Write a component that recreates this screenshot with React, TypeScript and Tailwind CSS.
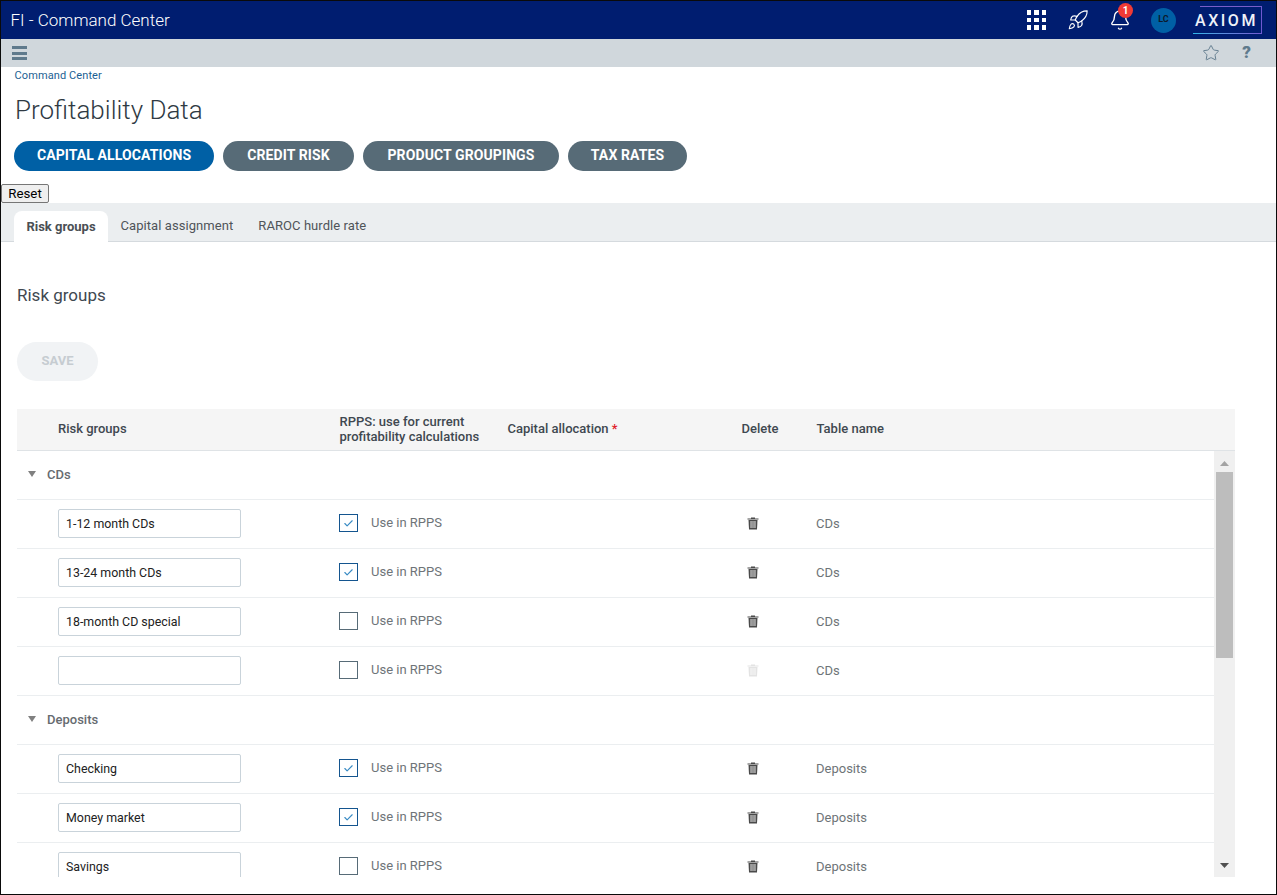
import React from 'react'
import { Bell, Rocket, Star, Check } from 'lucide-react'

const TABS = ['Risk groups', 'Capital assignment', 'RAROC hurdle rate']

const PILLS = [
  { label: 'CAPITAL ALLOCATIONS', width: 'w-[200px]', color: 'bg-[#0060a5]' },
  { label: 'CREDIT RISK', width: 'w-[131px]', color: 'bg-[#576b77]' },
  { label: 'PRODUCT GROUPINGS', width: 'w-[196px]', color: 'bg-[#576b77]' },
  { label: 'TAX RATES', width: 'w-[119px]', color: 'bg-[#576b77]' },
]

type Row = { name: string; checked: boolean; canDelete?: boolean }

const GROUPS: { title: string; rows: Row[] }[] = [
  {
    title: 'CDs',
    rows: [
      { name: '1-12 month CDs', checked: true },
      { name: '13-24 month CDs', checked: true },
      { name: '18-month CD special', checked: false },
      { name: '', checked: false, canDelete: false },
    ],
  },
  {
    title: 'Deposits',
    rows: [
      { name: 'Checking', checked: true },
      { name: 'Money market', checked: true },
      { name: 'Savings', checked: false },
    ],
  },
]

function TrashIcon({ disabled }: { disabled?: boolean }) {
  const dark = disabled ? '#e3e3e3' : '#4a4a4a'
  const mid = disabled ? '#f0f0f0' : '#a8a8a8'
  return (
    <svg width="12" height="13" viewBox="0 0 12 13">
      <path d="M4 1.5V.5h4v1h3.5v1H.5v-1z" fill={dark} />
      <path d="M1.5 3h9l-.5 9.5H2z" fill={dark} />
      <path d="M3.2 4h5.6v7H3.2z" fill={mid} />
      <path d="M4.8 4h.6v7h-.6zM6.6 4h.6v7h-.6z" fill={dark} opacity=".45" />
    </svg>
  )
}

function GroupRow({ title }: { title: string }) {
  return (
    <div className="h-[49px] shrink-0 flex items-center border-b border-[#ebeef0]">
      <svg className="ml-[11px] mt-[-2px]" width="8" height="6" viewBox="0 0 8 6">
        <path d="M0 0h8L4 6z" fill="#808080" />
      </svg>
      <span className="ml-[11px] text-[13px] font-medium text-[#666b70]">{title}</span>
    </div>
  )
}

function DataRow({ row, table }: { row: Row; table: string }) {
  return (
    <div className="h-[49px] shrink-0 flex items-center border-b border-[#ebeef0]">
      <div className="w-[322px] pl-[41px]">
        <input
          readOnly
          value={row.name}
          className="block w-[183px] h-[29px] -mt-[2px] px-[7px] bg-white border border-[#c9d3da] rounded-[2px] text-[12.4px] text-[#222] outline-none"
        />
      </div>
      <div className="w-[402px] flex items-center">
        <span className={`w-[19px] h-[18px] mt-[-2px] flex items-center justify-center border bg-white ${row.checked ? 'border-[#14558f]' : 'border-[#576b77]'}`}>
          {row.checked && <Check size={11} strokeWidth={2.5} className="text-[#3a8cc4]" />}
        </span>
        <span className="ml-[13px] mt-[-3px] text-[13px] text-[#6e7478]">Use in RPPS</span>
      </div>
      <div className="w-[75px] pl-[6px] flex -mt-[2px]">
        <TrashIcon disabled={row.canDelete === false} />
      </div>
      <span className="text-[13px] text-[#6e7478]">{table}</span>
    </div>
  )
}

export default function App() {
  return (
    <div className="w-[1277px] h-[895px] overflow-hidden border border-[#0a0a0a] bg-white [font-family:Roboto,sans-serif] flex flex-col">
      {/* top bar */}
      <header className="h-[38px] shrink-0 bg-[#001d70] flex items-center text-white">
        <span className="ml-[9.5px] mt-[1px] text-[17px] font-light">FI - Command Center</span>
        <div className="ml-auto flex items-center">
          <div className="grid grid-cols-3 gap-[3px]">
            {Array.from({ length: 9 }, (_, i) => (
              <span key={i} className="w-[4.5px] h-[4.5px] bg-white" />
            ))}
          </div>
          <Rocket size={22} strokeWidth={1.25} className="ml-[21px]" />
          <div className="relative ml-[20px] mt-[-1px]">
            <Bell size={22} strokeWidth={1.5} />
            <span className="absolute -top-[6px] left-[9px] w-[15px] h-[15px] rounded-full bg-[#f03a35] text-[10px] font-bold flex items-center justify-center">1</span>
          </div>
          <span className="ml-[20px] w-[25px] h-[25px] rounded-full bg-[#0060a5] text-[#0c1a2c] text-[9px] font-bold flex items-center justify-center">LC</span>
          <div className="relative ml-[17px] mr-[14px] w-[69px] h-[28px] pr-[2px] flex items-center justify-center">
            <span className="absolute top-0 right-0 w-[62px] h-px bg-[#7a5ec8]" />
            <span className="absolute top-0 right-0 w-px h-[28px] bg-[#6f58d0]" />
            <span className="absolute bottom-0 right-0 w-[69px] h-px bg-gradient-to-r from-[#2bb5e8] to-[#6f58d0]" />
            <span className="mt-[1px] text-[16px] font-medium tracking-[2.5px] text-[#eef2f8]">AXIOM</span>
          </div>
        </div>
      </header>

      {/* sub bar */}
      <div className="h-[28px] shrink-0 bg-[#d0d7dc] flex items-center">
        <div className="ml-[11px] w-[15px] flex flex-col gap-[2.5px]">
          <span className="h-[3px] bg-[#5f7a8c]" />
          <span className="h-[3px] bg-[#5f7a8c]" />
          <span className="h-[3px] bg-[#5f7a8c]" />
        </div>
        <Star size={18} strokeWidth={1.25} className="ml-auto text-[#5f7a8c]" />
        <span className="ml-[22px] mr-[25px] text-[17px] font-black text-[#5f7a8c]">?</span>
      </div>

      {/* page head */}
      <div className="pl-[13.5px] pt-[2px] h-[15px] text-[11px] leading-[13px] tracking-[0.1px] text-[#1c5f93] shrink-0">Command Center</div>
      <h1 className="pl-[14px] h-[59px] pt-[13px] shrink-0 text-[26px] leading-[30px] font-light text-[#2f3a43]">Profitability Data</h1>
      <div className="pl-[13px] flex gap-[9px] shrink-0">
        {PILLS.map(p => (
          <div key={p.label} className={`${p.width} ${p.color} h-[30px] pb-[2px] rounded-full flex items-center justify-center text-white text-[14px] font-bold tracking-[0.1px]`}>
            {p.label}
          </div>
        ))}
      </div>
      <div className="mt-[13px] h-[19px] shrink-0 flex">
        <button className="h-[19px] w-[48px] bg-[#efefef] border border-[#767676] rounded-[2px] text-[13.3px] leading-[15px] font-['Liberation_Sans',sans-serif] text-black">Reset</button>
      </div>

      {/* tabs */}
      <div className="h-[39px] shrink-0 bg-[#ebeef0] border-b border-[#d5dade] flex items-end pl-[13px]">
        {TABS.map((t, i) => (
          <div
            key={t}
            className={i === 0
              ? 'h-[31px] -mb-px w-[94px] pt-[1px] bg-white rounded-t-[8px] flex items-center justify-center text-[13px] font-bold text-[#4a4f54]'
              : 'h-[31px] px-[12.5px] pt-[1px] flex items-center text-[13px] tracking-[0.07px] text-[#4f5459]'}
          >
            {t}
          </div>
        ))}
      </div>

      <div className="pl-[16px] pt-[43px] shrink-0 h-[100px] text-[17px] leading-[20px] text-[#3f4850]">Risk groups</div>
      <div className="ml-[16px] w-[81px] h-[39px] pb-[2px] shrink-0 rounded-full bg-[#f1f3f5] flex items-center justify-center text-[13px] font-bold text-[#c6ccd1]">SAVE</div>

      {/* table */}
      <div className="mt-[28px] ml-[16px] w-[1218px] flex-1 min-h-0 flex flex-col">
        <div className="h-[42px] pb-[2px] shrink-0 bg-[#f5f5f5] border-b border-[#dfe3e6] flex items-center text-[13px] font-medium text-[#3f4850]">
          <span className="w-[322.5px] pl-[41px]">Risk groups</span>
          <span className="w-[168px] leading-[15px]">RPPS: use for current<br />profitability calculations</span>
          <span className="w-[234px]">Capital allocation <span className="text-[#e0202a]">*</span></span>
          <span className="w-[75px]">Delete</span>
          <span>Table name</span>
        </div>
        <div className="h-[426px] flex overflow-hidden">
          <div className="flex-1 flex flex-col overflow-hidden">
            {GROUPS.map(g => (
              <React.Fragment key={g.title}>
                <GroupRow title={g.title} />
                {g.rows.map((r, i) => <DataRow key={i} row={r} table={g.title} />)}
              </React.Fragment>
            ))}
          </div>
          <div className="w-[21px] shrink-0 bg-[#f0f0f0] flex flex-col items-center">
            <svg className="mt-[10px]" width="9" height="5" viewBox="0 0 9 5"><path d="M4.5 0L9 5H0z" fill="#a3a3a3" /></svg>
            <div className="mt-[6px] w-[17px] h-[186px] bg-[#bdbdbd]" />
            <svg className="mt-auto mb-[9px]" width="9" height="5" viewBox="0 0 9 5"><path d="M0 0h9L4.5 5z" fill="#505050" /></svg>
          </div>
        </div>
      </div>
    </div>
  )
}
